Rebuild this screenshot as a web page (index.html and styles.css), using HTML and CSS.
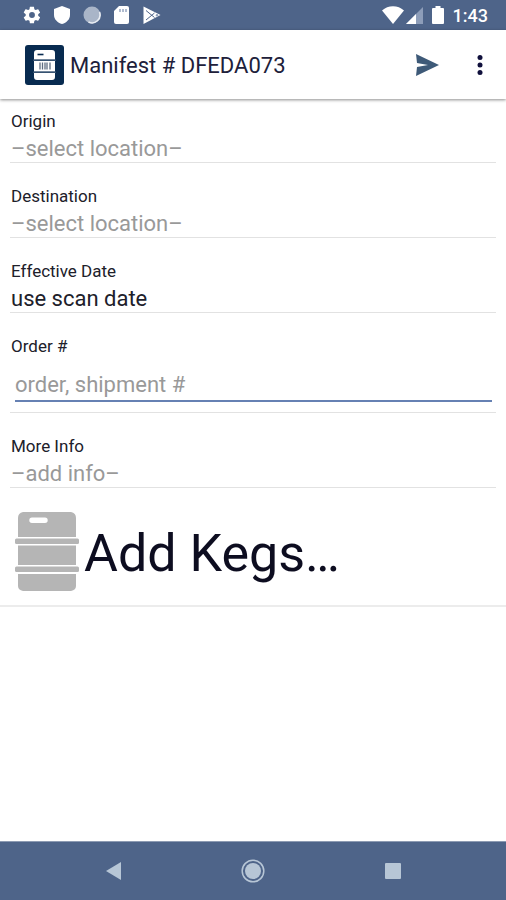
FILE: index.html
```html
<!DOCTYPE html>
<html lang="en">
<head>
<meta charset="utf-8">
<meta name="viewport" content="width=device-width, initial-scale=1">
<title>Manifest # DFEDA073</title>
<link rel="stylesheet" href="styles.css">
</head>
<body>
<div class="status">
  <div class="status-group notices">
    <svg width="20" height="20" viewBox="0 0 24 24" fill="#fff"><path d="M19.4 13c0-.3.1-.6.1-1s0-.7-.1-1l2.100-1.600c.2-.2.200-.4.100-.6l-2-3.500c-.1-.2-.4-.3-.6-.2l-2.500 1c-.5-.4-1.100-.7-1.700-1l-.4-2.600c0-.3-.2-.5-.5-.5h-4c-.2 0-.4.200-.5.400L9 5c-.6.300-1.200.6-1.700 1l-2.500-1c-.2-.1-.5 0-.6.200l-2 3.500c-.1.200-.1.500.1.600L4.500 11c0 .3-.1.600-.1 1s0 .7.100 1l-2.200 1.600c-.2.200-.2.400-.1.600l2 3.500c.1.200.4.300.6.200l2.500-1c.5.400 1.100.7 1.700 1l.4 2.600c0 .3.200.5.500.5h4c.3 0 .5-.2.500-.5l.4-2.600c.6-.3 1.200-.6 1.700-1l2.500 1c.2.100.5 0 .6-.2l2-3.500c.1-.2.100-.5-.1-.6zM12 15.500a3.500 3.500 0 1 1 0-7 3.500 3.500 0 0 1 0 7z"/></svg>
    <svg width="20" height="20" viewBox="0 0 20 20" fill="#fff"><path d="M10 1l8 3v6c0 4.200-3.400 7.800-8 9-4.600-1.200-8-4.800-8-9V4z"/></svg>
    <svg width="20" height="20" viewBox="0 0 20 20"><circle cx="10" cy="10" r="8.500" fill="#a9b5c8"/><path d="M17.500 7a8 8 0 0 1-11 10" fill="none" stroke="#e9edf3" stroke-width="1.600"/></svg>
    <svg width="20" height="20" viewBox="0 0 20 20"><path d="M7 1h8a2 2 0 0 1 2 2v14a2 2 0 0 1-2 2H4a2 2 0 0 1-2-2V6z" fill="#fff"/><path d="M8 4v3M11 4v3M14 4v3" stroke="#8fa0bd" stroke-width="1.400"/></svg>
    <svg width="20" height="20" viewBox="0 0 20 20"><path d="M1.500 1.500l17 8.500-17 9z" fill="#fff"/><path d="M4 5.500l8.500 7M4 15l8.500-7" fill="none" stroke="#4e6489" stroke-width="1"/><circle cx="15" cy="10.200" r="1.200" fill="#8d9db9"/></svg>
  </div>
  <div class="status-group">
    <svg width="22" height="20" viewBox="0 0 22 20" fill="#fff"><path d="M0 5.500C6-.2 16-.2 22 5.500L11 19z"/></svg>
    <svg class="signal" width="18" height="20" viewBox="0 0 18 20"><path d="M0 19L17 2v17z" fill="#8d9db9"/><path d="M0 19L10 9v10z" fill="#fff"/></svg>
    <svg class="battery" width="12" height="20" viewBox="0 0 12 20" fill="#fff"><path d="M3.500 1h5v2H11a1 1 0 0 1 1 1v14a1 1 0 0 1-1 1H1a1 1 0 0 1-1-1V4a1 1 0 0 1 1-1h2.500z"/></svg>
    <time class="clock">1:43</time>
  </div>
</div>
<header class="appbar">
  <svg width="39" height="40" viewBox="0 0 39 40"><rect width="39" height="40" rx="3" fill="#082b50"/><path d="M12 5h15q3 0 3 3v6.500H9V8q0-3 3-3zM9 16h21v10.500H9zM9 28h21v4q0 3-3 3H12q-3 0-3-3z" fill="#fff"/><path d="M8 15.200h23M8 27.200h23" stroke="#4c6580"/><path d="M12.500 9.500h6" stroke="#082b50" stroke-width="1.600"/><path d="M15 17.500v7M17.500 17.500v7M20 17.500v7M22 17.500v7M25 17.500v7" stroke="#5f6d82" stroke-width="1.300"/></svg>
  <h1 class="title">Manifest # DFEDA073</h1>
  <button class="icon-button" aria-label="Send"><svg width="24" height="24" viewBox="0 0 24 24"><path d="M0 1l23 11L0 23l1-9 11-2-11-2z" fill="#3e5a78"/></svg></button>
  <button class="icon-button more" aria-label="More options"><svg width="8" height="24" viewBox="0 0 8 24" fill="#10103c"><circle cx="4" cy="4.500" r="2.500"/><circle cx="4" cy="12" r="2.500"/><circle cx="4" cy="19.500" r="2.500"/></svg></button>
</header>
<main class="content">
  <form class="form">
    <div class="field">
      <label class="label" for="origin">Origin</label>
      <select class="value empty" id="origin"><option>–select location–</option></select>
    </div>
    <div class="field">
      <label class="label" for="destination">Destination</label>
      <select class="value empty" id="destination"><option>–select location–</option></select>
    </div>
    <div class="field">
      <label class="label" for="date">Effective Date</label>
      <button class="value" id="date" type="button">use scan date</button>
    </div>
    <div class="field">
      <label class="label" for="order">Order #</label>
      <input class="order" id="order" type="text" placeholder="order, shipment #">
    </div>
    <div class="field">
      <label class="label" for="info">More Info</label>
      <button class="value empty" id="info" type="button">–add info–</button>
    </div>
  </form>
  <button class="add" type="button">
    <svg width="64" height="80" viewBox="0 0 64 80" fill="#b5b5b5"><path fill-rule="evenodd" d="M8 0h48q5 1 5 6v19H3V6q0-5 5-6zM17 5.500a2.700 2.700 0 0 0 0 5.400h13a2.700 2.700 0 0 0 0-5.400z"/><rect y="26.500" width="64" height="5.500" rx="1.500"/><path d="M3 33.500h58v19.500H3z"/><rect y="54.500" width="64" height="5.500" rx="1.500"/><path d="M3 62h58v12q0 4-5 5H8q-5-1-5-5z"/></svg>
    <span class="add-text">Add Kegs…</span>
  </button>
</main>
<nav class="navbar">
  <button class="nav-button" aria-label="Back"><svg width="24" height="24" viewBox="0 0 24 24" fill="#b7c6d6"><path d="M5 12l15-9v18z"/></svg></button>
  <button class="nav-button" aria-label="Home"><svg width="24" height="24" viewBox="0 0 24 24" fill="#b7c6d6"><circle cx="12" cy="12" r="8"/><circle cx="12" cy="12" r="10.800" fill="none" stroke="#b7c6d6" stroke-width="1.500"/></svg></button>
  <button class="nav-button" aria-label="Recent apps"><svg width="24" height="24" viewBox="0 0 24 24" fill="#b7c6d6"><rect x="4" y="4" width="16" height="16" rx="1"/></svg></button>
</nav>
</body>
</html>
```
FILE: styles.css
```css
* { box-sizing: border-box; }
body {
  margin: 0;
  min-height: 100vh;
  display: flex;
  flex-direction: column;
  background: #fff;
  color: #20202a;
  font-family: Roboto, sans-serif;
}
svg { display: block; flex: none; }
button, input, select {
  margin: 0;
  padding: 0;
  border: 0;
  border-radius: 0;
  background: none;
  color: inherit;
  font: inherit;
  text-align: left;
}
.status {
  display: flex;
  justify-content: space-between;
  align-items: center;
  height: 30px;
  padding: 0 18px 0 22px;
  background: #4e6489;
  color: #fff;
}
.status-group { display: flex; align-items: center; }
.notices { gap: 10px; }
.signal { margin-left: 2px; }
.battery { margin-left: 8px; }
.clock { margin-left: 9px; font-size: 18px; font-weight: 500; }
.appbar {
  display: flex;
  align-items: center;
  height: 69px;
  padding: 0 22px 0 25px;
  box-shadow: 0 1px 3px rgba(0, 0, 0, .45);
}
.title {
  flex: 1;
  margin: 0 0 0 6px;
  padding-top: 2px;
  font-size: 22px;
  font-weight: 400;
  line-height: 28px;
  color: #20203a;
}
.icon-button { display: flex; justify-content: center; }
.more { margin-left: 36px; }
.content { flex: 1; }
.form {
  display: flex;
  flex-direction: column;
  gap: 24px;
  padding: 13px 10px 0;
}
.field {
  display: flex;
  flex-direction: column;
  border-bottom: 1px solid #e2e2e2;
}
.label { padding-left: 1px; font-size: 17px; line-height: 18px; }
.value {
  appearance: none;
  height: 32px;
  padding: 6px 0 0 1px;
  font-size: 22px;
  line-height: 26px;
}
.empty { color: #999; }
.order {
  height: 47px;
  margin: 0 4px 10px 5px;
  border-bottom: 2px solid #6681b3;
  padding-top: 14px;
  font-size: 22px;
  outline: 0;
}
.order::placeholder { color: #999; }
.add {
  display: flex;
  align-items: center;
  gap: 5px;
  width: 100%;
  padding: 24px 15px 13px;
  border-bottom: 2px solid #ececec;
  font-size: 52px;
  line-height: 80px;
  color: #0d0d20;
}
.add-text { padding-top: 4px; line-height: 76px; }
.navbar {
  display: flex;
  justify-content: center;
  align-items: center;
  gap: 116px;
  height: 59px;
  border-top: 1px solid #8d9bb3;
  background: #4e6489;
}
.nav-button { display: flex; }
```
